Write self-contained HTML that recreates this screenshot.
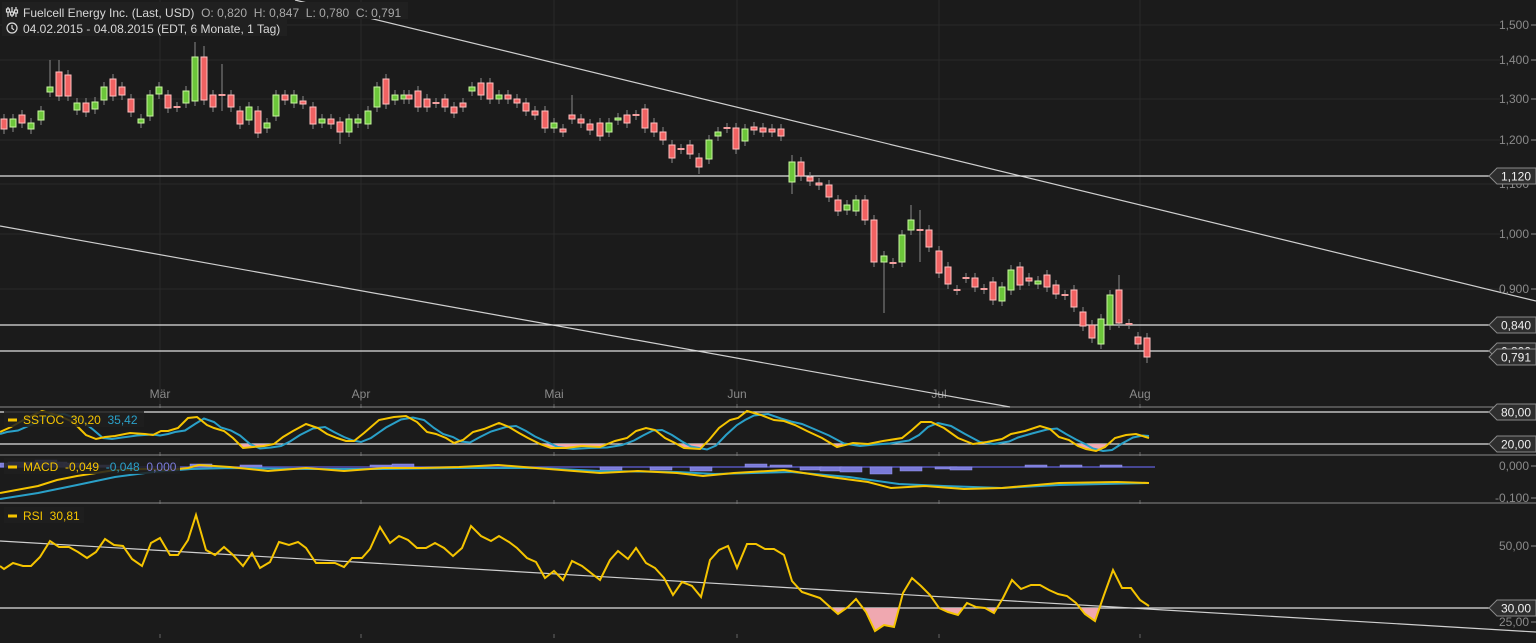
<!DOCTYPE html>
<html><head><meta charset="utf-8"><style>
html,body{margin:0;padding:0;background:#1b1b1b;}
body{width:1536px;height:643px;overflow:hidden;position:relative;font-family:"Liberation Sans",sans-serif;}
svg{position:absolute;left:0;top:0;}
</style></head><body>
<svg id="s" width="1536" height="643" viewBox="0 0 1536 643" xmlns="http://www.w3.org/2000/svg" font-family="Liberation Sans, sans-serif"></svg>
<script>
const S=document.getElementById('s');let h='';
const G='#2a2a2a';
[25,60,99,140,184,234,289].forEach(y=>h+=`<line x1="0" y1="${y}" x2="1500" y2="${y}" stroke="${G}"/>`);
[160,361,554,737,939,1140].forEach(x=>{h+=`<line x1="${x}" y1="0" x2="${x}" y2="405" stroke="${G}"/>`;
 [408,456,504,638].forEach(y=>h+=`<line x1="${x}" y1="${y-4}" x2="${x}" y2="${y}" stroke="#666"/>`);});
[['Mär',160],['Apr',361],['Mai',554],['Jun',737],['Jul',939],['Aug',1140]].forEach(m=>h+=`<text x="${m[1]}" y="398" fill="#8a8a8a" font-size="12" text-anchor="middle">${m[0]}</text>`);
[407,455,503].forEach(y=>h+=`<line x1="0" y1="${y}" x2="1536" y2="${y}" stroke="#8a8a8a"/>`);
h+=`<line x1="295" y1="0" x2="1536" y2="301" stroke="#cfcfcf" stroke-width="1.2"/>`;
h+=`<line x1="0" y1="226" x2="1010" y2="407" stroke="#cfcfcf" stroke-width="1.2"/>`;
[176,325,351,412,444,608].forEach(y=>h+=`<line x1="0" y1="${y}" x2="1495" y2="${y}" stroke="#e0e0e0" stroke-width="1.2"/>`);
const C=`4,119,129,r;13,119,127,g;22,115,123,r;31,123,129,g;41,111,120,g;50,87,92,g,60;59,72,96,r,60;68,75,96,r;77,103,110,g;86,103,112,r;95,102,109,g;104,87,100,g;113,79,96,r;122,87,95,r;131,99,112,r;141,119,123,g;150,95,116,g;159,87,94,g;168,95,108,r;177,107,107,d;186,91,103,g;195,57,101,g,42;204,57,100,r,46;213,95,107,r;222,95,95,d,64,111;231,95,107,r;240,111,124,r;249,107,120,g;258,111,133,r;267,123,128,g;276,95,116,g;285,95,100,r;294,95,103,g;303,101,104,r;313,107,124,r;322,119,123,g;331,119,124,r;340,122,132,r,,144;349,119,132,g;358,119,123,g;368,111,124,g;377,87,107,g;386,79,104,r;395,95,100,g;404,95,99,g;409,95,99,r;418,91,107,r;427,99,107,r;436,103,103,d;445,99,107,r;454,107,113,r;463,103,107,r;472,87,91,g;481,83,95,r;490,83,99,r;499,95,99,g;508,95,99,r;517,99,103,r;526,103,111,r;535,111,115,r;545,111,128,r;554,123,128,g;563,129,132,r;572,115,119,r,95;581,119,123,r;590,124,130,r;600,123,136,r;609,123,132,g;618,118,120,g;627,115,123,r;636,115,115,d;645,109,128,r;654,123,132,r;663,132,140,r;672,145,158,r;681,149,149,d;690,145,154,r;699,158,167,r,,174;709,140,159,g;718,132,136,g;727,128,128,d;736,128,149,r;745,129,141,g;754,127,130,r;763,128,132,r;772,129,132,r;781,129,136,r;792,162,182,g,155,194;801,162,176,r;810,177,181,r;819,183,185,r;829,185,197,r;838,200,211,r;847,205,210,g;856,200,211,g;865,200,220,r;874,220,262,r;884,256,262,g,,313;893,263,263,d;902,235,262,g;911,220,230,g,205;920,230,230,d,210,262;929,230,247,r;939,251,273,r;948,267,284,r;957,290,290,d;966,278,278,d;975,278,287,r;984,289,289,d;993,282,300,r;1002,287,301,g;1011,270,290,g;1020,267,285,r;1029,278,281,r;1038,281,284,g;1047,275,287,r;1056,285,294,r;1065,295,295,d;1074,290,307,r;1083,312,326,r;1092,325,338,r;1101,319,344,g;1110,295,325,g;1119,290,323,r,275;1129,324,324,d;1138,337,344,r;1147,338,357,r,,363`;
C.split(';').forEach(s=>{const a=s.split(',');const x=+a[0],t=+a[1],b=+a[2],k=a[3];
 const hi=a[4]?+a[4]:t-5,lo=a[5]?+a[5]:b+5;
 h+=`<line x1="${x}" y1="${hi}" x2="${x}" y2="${lo}" stroke="#8a8a8a"/>`;
 if(k=='d')h+=`<rect x="${x-3.5}" y="${t-1}" width="7" height="2" fill="#f4a0a0"/>`;
 else if(k=='g')h+=`<rect x="${x-3}" y="${t}" width="6" height="${Math.max(b-t,2)}" fill="#6cc63a" stroke="#c8f5a0" stroke-width="1"/>`;
 else h+=`<rect x="${x-3}" y="${t}" width="6" height="${Math.max(b-t,2)}" fill="#f06262" stroke="#ffc0c0" stroke-width="1"/>`;});
const SY=[[0,432],[11,427],[27,418],[42,411],[57,415],[73,422],[86,435],[96,439],[105,437],[115,436],[130,433],[145,434],[153,435],[161,431],[168,431],[178,428],[188,418],[197,417],[207,425],[214,428],[224,431],[233,438],[243,448],[253,447],[264,446],[274,444],[283,437],[293,431],[306,424],[318,428],[327,434],[337,438],[346,441],[354,441],[364,433],[379,420],[394,417],[406,416],[417,422],[427,432],[436,434],[446,438],[454,443],[463,440],[473,432],[484,429],[499,423],[509,427],[519,433],[528,438],[540,444],[551,448],[566,448],[582,446],[600,447],[615,441],[627,438],[636,431],[646,428],[655,430],[665,438],[675,443],[684,448],[700,449],[709,440],[719,428],[730,420],[738,418],[747,411],[761,415],[774,420],[784,421],[795,425],[807,431],[822,438],[837,447],[853,443],[868,444],[883,441],[902,438],[912,430],[921,422],[931,422],[944,428],[958,438],[973,444],[987,442],[1002,439],[1011,434],[1025,431],[1040,426],[1050,429],[1059,437],[1069,440],[1078,446],[1086,449],[1096,451],[1105,447],[1115,438],[1126,435],[1136,434],[1149,438]];
const pts=a=>a.map(p=>p[0]+','+p[1]).join(' ');
h+=`<clipPath id="c1"><rect x="0" y="444" width="1536" height="12"/></clipPath>`;
h+=`<polygon points="${pts(SY)} 1149,444 0,444" fill="#f0a8b0" clip-path="url(#c1)"/>`;
const SB=SY.map((p,i)=>[p[0]+7,i>0?(p[1]+SY[i-1][1])/2+1:p[1]]);SB.unshift([0,434]);SB.pop();SB.push([1149,436]);
h+=`<polyline points="${pts(SB)}" fill="none" stroke="#2aa0c8" stroke-width="2"/>`;
h+=`<polyline points="${pts(SY)}" fill="none" stroke="#f5c400" stroke-width="2"/>`;
h+=`<line x1="0" y1="467" x2="1155" y2="467" stroke="#5555bb" stroke-width="1.5"/>`;
[[0,463,4],[8,462,5],[35,460,7],[45,462,5],[64,463,4],[90,465,2],[190,464,3],[240,465,2],[370,465,2],[392,464,3],[600,467,3],[650,467,3],[690,467,4],[745,464,3],[770,465,2],[800,467,3],[820,467,4],[840,467,5],[870,467,7],[900,467,4],[935,467,2],[950,467,3],[1025,465,2],[1060,465,2],[1100,465,2]].forEach((b,i)=>{const w=[0,8].includes(b[0])?40:22;h+=`<rect x="${b[0]}" y="${b[1]}" width="${w}" height="${b[2]}" fill="#7a7ad8" stroke="#9a9af0" stroke-width=".5"/>`;});
const MY=[[0,493],[38,486],[57,480],[77,476],[96,473],[115,470],[145,469],[168,470],[188,468],[199,465],[230,467],[268,471],[306,468],[344,471],[383,468],[421,468],[459,467],[498,465],[536,468],[574,471],[600,473],[638,471],[677,473],[703,476],[734,473],[784,470],[830,477],[868,482],[891,488],[925,486],[964,489],[1002,488],[1059,483],[1117,482],[1149,483]];
const MB=[[0,499],[38,493],[77,485],[115,477],[153,472],[191,469],[230,468],[306,469],[383,469],[459,468],[536,468],[600,471],[677,472],[715,474],[791,472],[849,477],[899,484],[944,486],[1002,488],[1059,485],[1149,483]];
h+=`<polyline points="${pts(MB)}" fill="none" stroke="#2aa0c8" stroke-width="2"/>`;
h+=`<polyline points="${pts(MY)}" fill="none" stroke="#f5c400" stroke-width="2"/>`;
h+=`<line x1="0" y1="541" x2="1536" y2="632" stroke="#cfcfcf" stroke-width="1.2"/>`;
const R=[[0,566],[4,569],[13,563],[23,566],[31,566],[40,557],[50,541],[59,547],[69,547],[78,552],[87,558],[96,552],[105,539],[114,545],[123,546],[132,559],[142,566],[151,543],[160,538],[170,555],[178,555],[188,540],[196,515],[206,550],[215,555],[224,547],[233,555],[243,566],[252,553],[260,568],[270,562],[279,542],[289,545],[298,542],[306,548],[316,563],[325,563],[335,563],[344,567],[352,558],[362,558],[370,549],[380,527],[390,543],[399,536],[408,540],[417,548],[426,548],[435,543],[444,548],[453,556],[462,548],[471,526],[481,536],[491,541],[499,536],[509,542],[517,548],[527,558],[536,562],[545,578],[554,571],[563,580],[572,561],[582,566],[600,580],[610,560],[618,551],[628,559],[636,548],[646,563],[655,568],[664,578],[673,595],[682,582],[692,586],[701,597],[710,560],[719,550],[728,546],[737,568],[747,544],[756,544],[765,549],[774,549],[784,555],[792,581],[802,592],[811,595],[820,598],[830,607],[838,614],[848,607],[856,599],[866,612],[875,631],[884,625],[894,627],[903,593],[912,578],[921,586],[930,595],[939,608],[948,612],[958,615],[967,603],[976,607],[985,608],[994,613],[1003,598],[1012,580],[1021,589],[1031,585],[1040,585],[1049,590],[1058,594],[1067,596],[1076,603],[1085,614],[1095,621],[1104,595],[1113,570],[1122,588],[1131,588],[1140,600],[1149,606]];
h+=`<clipPath id="c2"><rect x="0" y="608" width="1536" height="40"/></clipPath>`;
h+=`<polygon points="${pts(R)} 1149,608 0,608" fill="#f0a8b0" clip-path="url(#c2)"/>`;
h+=`<polyline points="${pts(R)}" fill="none" stroke="#f5c400" stroke-width="2"/>`;
[['1,500',25],['1,400',60],['1,300',99],['1,200',140],['1,100',184],['1,000',234],['0,900',289],['0,000',466],['-0,100',498],['50,00',546],['25,00',622]].forEach(l=>{
 h+=`<text x="1529" y="${l[1]+4}" fill="#8a8a8a" font-size="12" text-anchor="end">${l[0]}</text><line x1="1531" y1="${l[1]}" x2="1536" y2="${l[1]}" stroke="#8a8a8a"/>`;});
function tag(t,y){h+=`<polygon points="1489,${y} 1497,${y-8} 1536,${y-8} 1536,${y+8} 1497,${y+8}" fill="#2e2e2e" stroke="#8a8a8a"/><text x="1531" y="${y+4.5}" fill="#f0f0f0" font-size="12" text-anchor="end">${t}</text>`;}
tag('1,120',176);tag('0,840',325);tag('0,800',351);tag('0,791',357);tag('80,00',412);tag('20,00',444);tag('30,00',608);
h+=`<rect x="2" y="2" width="406" height="17" fill="#202020"/><rect x="2" y="19" width="285" height="17" fill="#202020"/>`;
h+=`<g stroke="#ddd" stroke-width="1.2" fill="none"><line x1="8" y1="7" x2="8" y2="17"/><line x1="12" y1="7" x2="12" y2="17"/><line x1="16" y1="7" x2="16" y2="17"/><rect x="6.5" y="9" width="3" height="3" fill="#1b1b1b"/><rect x="10.5" y="12" width="3" height="3" fill="#1b1b1b"/><rect x="14.5" y="10" width="3" height="3" fill="#1b1b1b"/><circle cx="12" cy="28" r="5"/><path d="M12 25v3.3l2 1.5"/></g>`;
h+=`<text x="23" y="17" fill="#d8d8d8" font-size="12">Fuelcell Energy Inc. (Last, USD) <tspan fill="#a8a8a8">&#160;O: 0,820 &#160;H: 0,847 &#160;L: 0,780 &#160;C: 0,791</tspan></text>`;
h+=`<text x="23" y="33" fill="#d8d8d8" font-size="12">04.02.2015 - 04.08.2015 (EDT, 6 Monate, 1 Tag)</text>`;
function lab(y,w,parts){h+=`<rect x="4" y="${y-9}" width="${w}" height="16" fill="#1f1f1f" opacity=".85"/><rect x="8" y="${y-1.5}" width="9" height="3" fill="#f5c400"/>`;h+=`<text x="23" y="${y+4}" font-size="12" xml:space="preserve">`+parts.map(p=>`<tspan fill="${p[1]}">${p[0]}</tspan>`).join('')+`</text>`;}
lab(420,140,[['SSTOC  30,20 ','#f5c400'],[' 35,42','#2aa0c8']]);
lab(467,176,[['MACD  -0,049 ','#f5c400'],[' -0,048 ','#2aa0c8'],[' 0,000','#7a7ad8']]);
lab(516,80,[['RSI  30,81','#f5c400']]);
S.innerHTML=h;
</script>
</body></html>
